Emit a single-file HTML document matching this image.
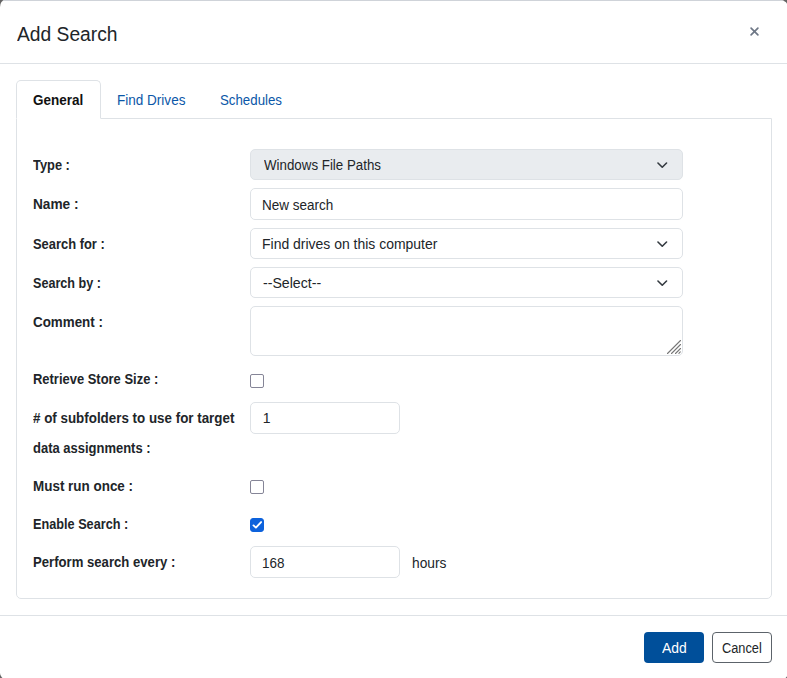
<!DOCTYPE html>
<html><head><meta charset="utf-8">
<style>
html,body{margin:0;padding:0;width:787px;height:678px;overflow:hidden;background:#646464;}
body{font-family:"Liberation Sans",sans-serif;color:#212529;position:relative;}
.m{position:absolute;left:0;top:0;width:788px;height:679px;background:#fff;border-radius:5px 8px 6px 6px / 7px 7px 6px 6px;overflow:hidden;}
.topb{position:absolute;left:0;top:0;width:787px;height:1px;background:#cfd3d9;}
.t{position:absolute;white-space:nowrap;line-height:1;transform-origin:0 0;}
.hl{position:absolute;height:1px;background:#dee2e6;}
.box{position:absolute;box-sizing:border-box;border:1px solid #dee2e6;background:#fff;}
.chev{position:absolute;}
.cb{position:absolute;box-sizing:border-box;width:14px;height:14px;border:1px solid #858597;border-radius:2px;background:#fff;}
</style></head><body>
<div class="m">
<div class="topb"></div>
<svg style="position:absolute;left:749px;top:26px" width="11" height="11" viewBox="0 0 11 11"><path d="M2.1 2.1 L8.9 8.9 M8.9 2.1 L2.1 8.9" stroke="#6e7786" stroke-width="1.7" stroke-linecap="round"/></svg>
<div class="hl" style="left:0;top:63px;width:787px"></div>
<!-- tab content -->
<div class="box" style="left:16px;top:118px;width:756px;height:481px;border-radius:0 0 5px 5px"></div>
<div class="box" style="left:16px;top:80px;width:85px;height:39px;border-radius:5px 5px 0 0;border-bottom-color:#fff"></div>
<!-- inputs -->
<div class="box" style="left:250px;top:149px;width:433px;height:31px;border-radius:5px;background:#e9ecef"></div>
<div class="box" style="left:250px;top:188px;width:433px;height:32px;border-radius:5px"></div>
<div class="box" style="left:250px;top:228px;width:433px;height:31px;border-radius:5px"></div>
<div class="box" style="left:250px;top:267px;width:433px;height:31px;border-radius:5px"></div>
<div class="box" style="left:250px;top:306px;width:433px;height:50px;border-radius:5px"></div>
<div class="box" style="left:250px;top:402px;width:150px;height:32px;border-radius:5px"></div>
<div class="box" style="left:250px;top:546px;width:150px;height:32px;border-radius:5px"></div>
<svg class="chev" width="13" height="9" viewBox="0 0 13 9" style="left:656px;top:161px"><path d="M1.95 2.0 L6.25 6.2 L10.55 2.0" fill="none" stroke="#343a40" stroke-width="1.6" stroke-linecap="round" stroke-linejoin="round"/></svg>
<svg class="chev" width="13" height="9" viewBox="0 0 13 9" style="left:656px;top:240px"><path d="M1.95 2.0 L6.25 6.2 L10.55 2.0" fill="none" stroke="#343a40" stroke-width="1.6" stroke-linecap="round" stroke-linejoin="round"/></svg>
<svg class="chev" width="13" height="9" viewBox="0 0 13 9" style="left:656px;top:279px"><path d="M1.95 2.0 L6.25 6.2 L10.55 2.0" fill="none" stroke="#343a40" stroke-width="1.6" stroke-linecap="round" stroke-linejoin="round"/></svg>
<svg style="position:absolute;left:666px;top:339px" width="16" height="16" viewBox="0 0 16 16"><path d="M1.5 14.5 L14.5 1.5 M5.5 14.5 L14.5 5.5 M9.5 14.5 L14.5 9.5 M12.9 14.3 L14.3 12.9" stroke="#777" stroke-width="1.1" stroke-linecap="round"/></svg>
<!-- checkboxes -->
<div class="cb" style="left:250px;top:374px"></div>
<div class="cb" style="left:250px;top:480px"></div>
<div class="cb" style="left:250px;top:518px;background:#0d62dc;border-color:#0d62dc;border-radius:3px"></div>
<svg style="position:absolute;left:250px;top:518px" width="14" height="14" viewBox="0 0 14 14"><path d="M3.5 7.4 L5.9 9.6 L11.1 4.1" fill="none" stroke="#fff" stroke-width="1.9" stroke-linecap="round" stroke-linejoin="round"/></svg>
<!-- footer -->
<div class="hl" style="left:0;top:615px;width:787px"></div>
<div style="position:absolute;left:644px;top:632px;width:60px;height:31px;background:#004f9a;border-radius:4px"></div>
<div style="position:absolute;box-sizing:border-box;left:712px;top:632px;width:60px;height:31px;border:1px solid #5c636a;border-radius:4px"></div>
<span class="t" style="left:16.56px;top:23.67px;font-size:20px;font-weight:400;color:#212529;letter-spacing:0.000px;transform:scaleX(0.9615)">Add Search</span>
<span class="t" style="left:33.10px;top:94.46px;font-size:13.75px;font-weight:700;color:#111;letter-spacing:0.000px;transform:scaleX(0.9809)">General</span>
<span class="t" style="left:117.34px;top:92.95px;font-size:14px;font-weight:400;color:#0b57a8;letter-spacing:0.000px;transform:scaleX(0.9664)">Find Drives</span>
<span class="t" style="left:219.68px;top:92.95px;font-size:14px;font-weight:400;color:#0b57a8;letter-spacing:0.000px;transform:scaleX(0.9481)">Schedules</span>
<span class="t" style="left:33.10px;top:158.76px;font-size:13.75px;font-weight:700;color:#212529;letter-spacing:0.000px;transform:scaleX(0.9347)">Type :</span>
<span class="t" style="left:33.10px;top:198.06px;font-size:13.75px;font-weight:700;color:#212529;letter-spacing:0.000px;transform:scaleX(0.9934)">Name :</span>
<span class="t" style="left:33.10px;top:237.66px;font-size:13.75px;font-weight:700;color:#212529;letter-spacing:0.000px;transform:scaleX(0.9395)">Search for :</span>
<span class="t" style="left:33.10px;top:277.06px;font-size:13.75px;font-weight:700;color:#212529;letter-spacing:0.000px;transform:scaleX(0.9160)">Search by :</span>
<span class="t" style="left:33.10px;top:315.86px;font-size:13.75px;font-weight:700;color:#212529;letter-spacing:0.000px;transform:scaleX(0.9733)">Comment :</span>
<span class="t" style="left:33.10px;top:373.46px;font-size:13.75px;font-weight:700;color:#212529;letter-spacing:0.000px;transform:scaleX(0.9419)">Retrieve Store Size :</span>
<span class="t" style="left:33.10px;top:411.76px;font-size:13.75px;font-weight:700;color:#212529;letter-spacing:0.000px;transform:scaleX(0.9727)"># of subfolders to use for target</span>
<span class="t" style="left:33.10px;top:441.96px;font-size:13.75px;font-weight:700;color:#212529;letter-spacing:0.000px;transform:scaleX(0.9440)">data assignments :</span>
<span class="t" style="left:33.10px;top:479.76px;font-size:13.75px;font-weight:700;color:#212529;letter-spacing:0.000px;transform:scaleX(0.9774)">Must run once :</span>
<span class="t" style="left:33.10px;top:517.76px;font-size:13.75px;font-weight:700;color:#212529;letter-spacing:0.000px;transform:scaleX(0.9229)">Enable Search :</span>
<span class="t" style="left:33.10px;top:555.76px;font-size:13.75px;font-weight:700;color:#212529;letter-spacing:0.000px;transform:scaleX(0.9551)">Perform search every :</span>
<span class="t" style="left:263.59px;top:158.15px;font-size:14px;font-weight:400;color:#212529;letter-spacing:0.000px;transform:scaleX(0.9515)">Windows File Paths</span>
<span class="t" style="left:262.25px;top:197.85px;font-size:14px;font-weight:400;color:#212529;letter-spacing:0.000px;transform:scaleX(0.9642)">New search</span>
<span class="t" style="left:262.17px;top:236.95px;font-size:14px;font-weight:400;color:#212529;letter-spacing:0.000px;transform:scaleX(0.9975)">Find drives on this computer</span>
<span class="t" style="left:263.44px;top:275.75px;font-size:14px;font-weight:400;color:#212529;letter-spacing:0.000px;transform:scaleX(1.0091)">--Select--</span>
<span class="t" style="left:262.78px;top:411.45px;font-size:14px;font-weight:400;color:#212529;letter-spacing:0.000px;transform:scaleX(1.0000)">1</span>
<span class="t" style="left:262.48px;top:555.95px;font-size:14px;font-weight:400;color:#212529;letter-spacing:0.000px;transform:scaleX(0.9620)">168</span>
<span class="t" style="left:412.11px;top:555.95px;font-size:14px;font-weight:400;color:#212529;letter-spacing:0.000px;transform:scaleX(0.9847)">hours</span>
<span class="t" style="left:661.90px;top:640.95px;font-size:14px;font-weight:400;color:#fff;letter-spacing:0.000px;transform:scaleX(0.9947)">Add</span>
<span class="t" style="left:721.72px;top:640.95px;font-size:14px;font-weight:400;color:#212529;letter-spacing:0.000px;transform:scaleX(0.9135)">Cancel</span>
</div>
</body></html>
